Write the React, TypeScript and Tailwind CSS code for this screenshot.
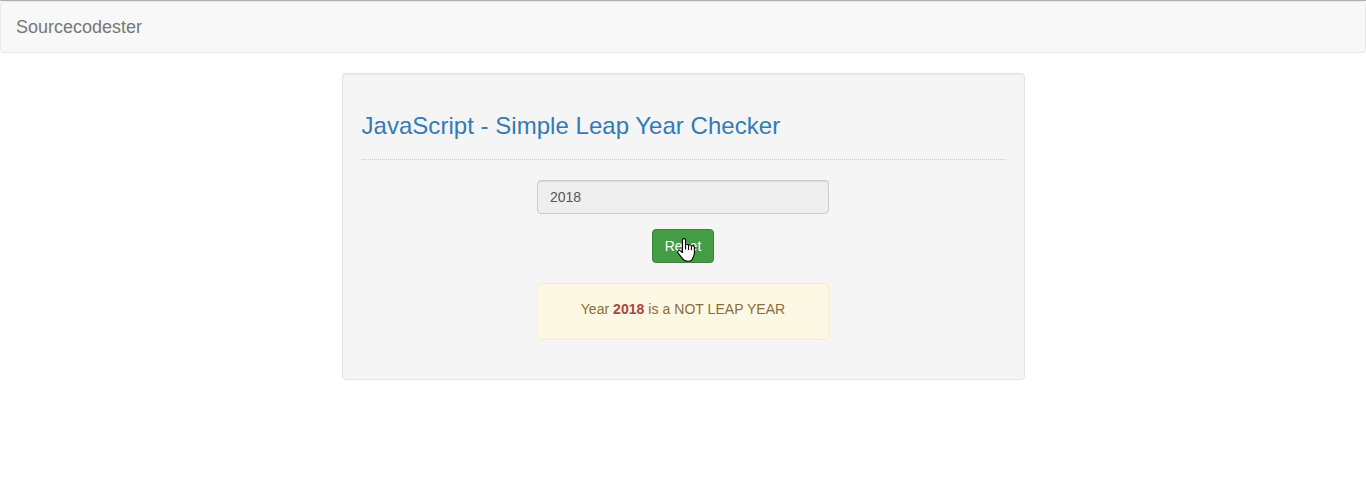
import { useState } from "react";

function HandPointer() {
  return (
    <svg
      className="pointer-events-none absolute left-[25px] top-[9px] h-[25px] w-[19px]"
      viewBox="0 0 19 25"
      fill="white"
      stroke="black"
      strokeWidth="1.1"
      strokeLinejoin="round"
      strokeLinecap="round"
    >
      <path d="M5.5 14.5V2C5.5 0.1 8.5 0.1 8.5 2V7C9 5.7 11.4 5.8 11.5 7.4C12 6.3 14.3 6.5 14.4 8.2C15 7.3 17.4 7.6 17.4 9.6V15.3C17.4 17.6 16.2 18.6 15.7 20.4C15.1 22.5 13.3 23.3 11 23.3C8.4 23.3 6.6 22.4 5.3 20.3L1.1 15C0 13.3 1.7 11.9 3.3 12.9Z" />
      <path d="M8.5 7V11M11.5 7.4V11.4M14.4 8.2V11.7" fill="none" />
    </svg>
  );
}

export default function App() {
  const [year, setYear] = useState("2018");
  const value = Number(year);
  const isLeap = (value % 4 === 0 && value % 100 !== 0) || value % 400 === 0;

  return (
    <div className="min-h-screen border-t border-[#b0b0b0] bg-white font-['Liberation_Sans',Arial,sans-serif] text-[14px] leading-5 text-[#333]">
      <nav className="mb-5 flex h-[52px] items-center rounded-[4px] border border-[#e7e7e7] bg-[#f8f8f8] px-[15px]">
        <a className="text-[18px] leading-5 text-[#777]">Sourcecodester</a>
      </nav>

      <main className="mx-auto h-[307px] w-[683px] rounded-[4px] border border-[#e3e3e3] bg-[#f5f5f5] p-[19px] shadow-[inset_0_1px_1px_rgba(0,0,0,0.05)]">
        <h3 className="mt-5 text-[24px] leading-[26.4px] tracking-[0.03px] text-[#337ab7]">
          JavaScript - Simple Leap Year Checker
        </h3>
        <hr className="my-5 border-t border-dotted border-[#ccc]" />

        <div className="mx-auto flex w-[292px] flex-col items-center">
          <input
            type="text"
            value={year}
            readOnly
            className="h-[34px] w-full rounded-[4px] border border-[#ccc] bg-[#eee] px-3 py-1.5 text-[#555] shadow-[inset_0_1px_1px_rgba(0,0,0,0.075)] outline-none"
          />
          <div className="relative mt-[15px]">
            <button
              type="button"
              onClick={() => setYear("")}
              className="h-[34px] w-[62px] rounded-[4px] border border-[#398439] bg-[#449d44] text-center text-white"
            >
              Reset
            </button>
            <HandPointer />
          </div>
          {year && (
            <div className="mt-5 h-[57px] w-full rounded-[4px] border border-[#faebcc] bg-[#fcf8e3] p-[15px] text-center tracking-[0.04px] text-[#8a6d3b]">
              Year <strong className="font-bold text-[#a94442]">{year}</strong> is a{" "}
              {isLeap ? "LEAP YEAR" : "NOT LEAP YEAR"}
            </div>
          )}
        </div>
      </main>
    </div>
  );
}
